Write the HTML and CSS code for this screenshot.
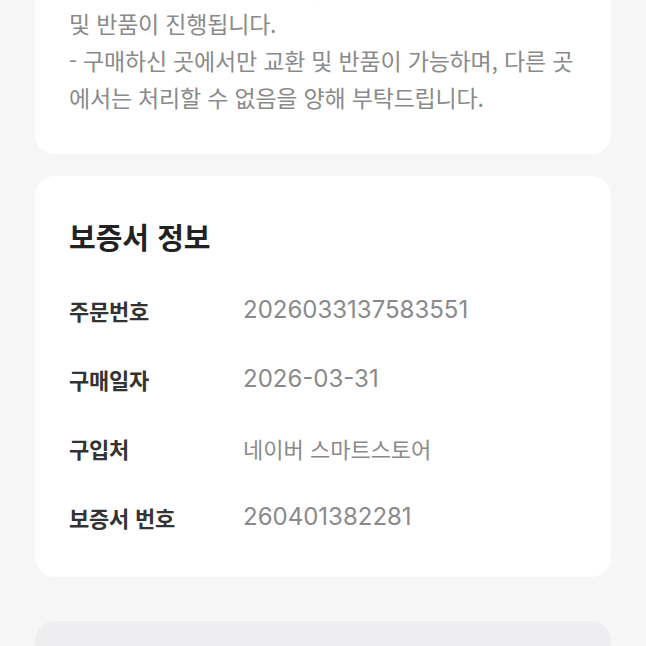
FILE: index.html
```html
<!DOCTYPE html>
<html lang="ko">
<head>
    <meta charset="UTF-8">
    <meta name="viewport" content="width=device-width, initial-scale=1.0">
    <title>보증서 정보</title>
    <link rel="stylesheet" href="styles.css">
</head>
<body>
    <div class="page">
        <div class="card notice-card">
            <p class="notice-text">
                - 제품 하자가 확인된 경우, 구매처의 정책에 따라 교환<br>
                및 반품이 진행됩니다.<br>
                - 구매하신 곳에서만 교환 및 반품이 가능하며, 다른 곳<br>
                에서는 처리할 수 없음을 양해 부탁드립니다.
            </p>
        </div>

        <div class="card info-card">
            <h2>보증서 정보</h2>
            <div class="info-row">
                <span class="info-label">주문번호</span>
                <span class="info-value num">2026033137583551</span>
            </div>
            <div class="info-row">
                <span class="info-label">구매일자</span>
                <span class="info-value num">2026-03-31</span>
            </div>
            <div class="info-row">
                <span class="info-label">구입처</span>
                <span class="info-value">네이버 스마트스토어</span>
            </div>
            <div class="info-row">
                <span class="info-label">보증서 번호</span>
                <span class="info-value num">260401382281</span>
            </div>
        </div>

        <div class="card gray-card"></div>
    </div>
</body>
</html>
```

FILE: styles.css
```css
body {
    font-family: "Noto Sans CJK KR", "Noto Sans", sans-serif;
    background-color: #f6f6f7;
    margin: 0;
    overflow: hidden;
}

.page {
    display: flex;
    flex-direction: column;
    gap: 22px;
    padding: 0 35px;
    margin-top: -32px; /* page is scrolled, top of first card is out of view */
}

.card {
    background-color: #fff;
    border-radius: 20px;
}

.notice-card {
    padding: 0 34px 38px;
}

.notice-text {
    margin: 0;
    font-size: 23px;
    line-height: 37px;
    color: #8a8a8a;
    letter-spacing: -0.2px;
    white-space: nowrap;
}

.info-card {
    padding: 38px 34px 26px;
}

.info-card h2 {
    margin: 0 0 17px;
    font-size: 29px;
    font-weight: 700;
    color: #222;
    line-height: 44px;
}

.info-row {
    display: flex;
    align-items: center;
    height: 69px;
}

.info-label {
    width: 174px;
    font-size: 22px;
    font-weight: 700;
    color: #333;
    letter-spacing: -0.2px;
}

.info-value {
    font-family: Inter, "Noto Sans CJK KR", sans-serif;
    font-size: 22px;
    color: #8a8a8a;
}

.info-value.num {
    font-size: 24px;
}

.gray-card {
    background-color: #eeeef0;
    height: 80px;
    margin-top: 22px;
}
```
